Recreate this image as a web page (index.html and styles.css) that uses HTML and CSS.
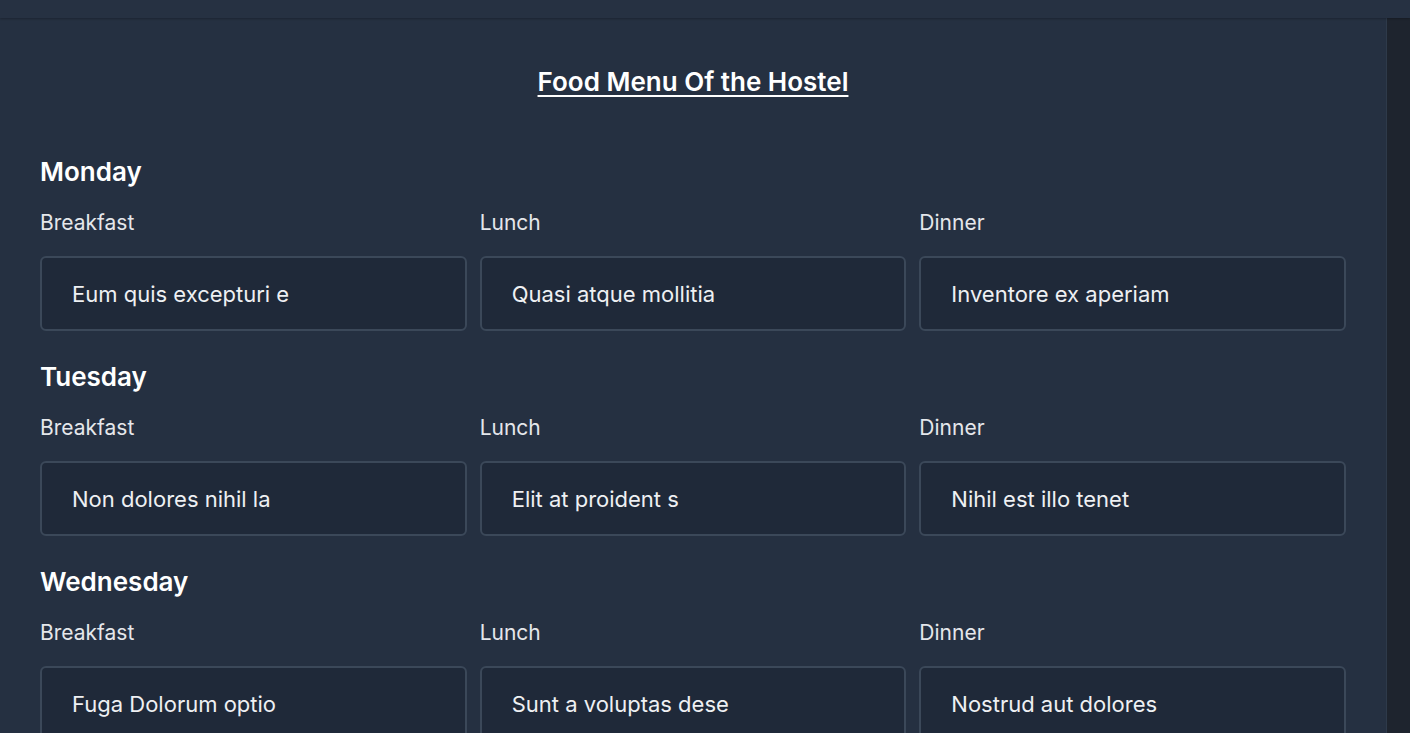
FILE: index.html
```html
<!DOCTYPE html>
<html lang="en">
<head>
<meta charset="utf-8">
<title>Food Menu Of the Hostel</title>
<link rel="stylesheet" href="styles.css">
</head>
<body>
<header class="topbar"></header>
<div class="frame">
  <main class="content">
    <h1 class="title">Food Menu Of the Hostel</h1>
    <section class="day">
      <h2 class="day-name">Monday</h2>
      <div class="meals">
        <label class="meal"><span class="meal-label">Breakfast</span><input class="meal-input" type="text" value="Eum quis excepturi e"></label>
        <label class="meal"><span class="meal-label">Lunch</span><input class="meal-input" type="text" value="Quasi atque mollitia"></label>
        <label class="meal"><span class="meal-label">Dinner</span><input class="meal-input" type="text" value="Inventore ex aperiam"></label>
      </div>
    </section>
    <section class="day">
      <h2 class="day-name">Tuesday</h2>
      <div class="meals">
        <label class="meal"><span class="meal-label">Breakfast</span><input class="meal-input" type="text" value="Non dolores nihil la"></label>
        <label class="meal"><span class="meal-label">Lunch</span><input class="meal-input" type="text" value="Elit at proident s"></label>
        <label class="meal"><span class="meal-label">Dinner</span><input class="meal-input" type="text" value="Nihil est illo tenet"></label>
      </div>
    </section>
    <section class="day">
      <h2 class="day-name">Wednesday</h2>
      <div class="meals">
        <label class="meal"><span class="meal-label">Breakfast</span><input class="meal-input" type="text" value="Fuga Dolorum optio"></label>
        <label class="meal"><span class="meal-label">Lunch</span><input class="meal-input" type="text" value="Sunt a voluptas dese"></label>
        <label class="meal"><span class="meal-label">Dinner</span><input class="meal-input" type="text" value="Nostrud aut dolores"></label>
      </div>
    </section>
  </main>
  <div class="scroll-track"></div>
</div>
</body>
</html>
```

FILE: styles.css
```css
* { box-sizing: border-box; }
html, body { margin: 0; padding: 0; height: 100%; overflow: hidden; }
body {
  background: #253041;
  color: #e5e7eb;
  font-family: Inter, "Noto Sans", sans-serif;
}
.topbar {
  height: 18px;
  background: #263142;
  box-shadow: 0 1px 2px rgba(0,0,0,0.25);
  position: relative;
  z-index: 1;
}
.frame {
  display: flex;
  height: calc(100% - 18px);
}
.content {
  flex: 1;
  padding: 48px 40px 0;
  display: flex;
  flex-direction: column;
  gap: 30px;
}
.title {
  margin: 0 0 28px;
  text-align: center;
  font-size: 26px;
  line-height: 32px;
  font-weight: 600;
  color: #ffffff;
  text-decoration: underline;
  text-underline-offset: 4px;
  text-decoration-thickness: 2px;
}
.day-name {
  margin: 0 0 21px;
  font-size: 26px;
  line-height: 32px;
  font-weight: 600;
  color: #ffffff;
}
.meals {
  display: grid;
  grid-template-columns: repeat(3, 1fr);
  column-gap: 13px;
}
.meal {
  display: flex;
  flex-direction: column;
}
.meal-label {
  font-size: 21px;
  line-height: 28px;
  margin-bottom: 19px;
  color: #e5e7eb;
}
.meal-input {
  height: 75px;
  width: 100%;
  padding: 0 30px;
  background: #1f2939;
  border: 2px solid #3b4859;
  border-radius: 6px;
  color: #eef0f3;
  font-family: inherit;
  font-size: 22px;
  outline: none;
}
.scroll-track {
  width: 24px;
  background: #1e242e;
  border-left: 1px solid #2e3a4a;
}
```
